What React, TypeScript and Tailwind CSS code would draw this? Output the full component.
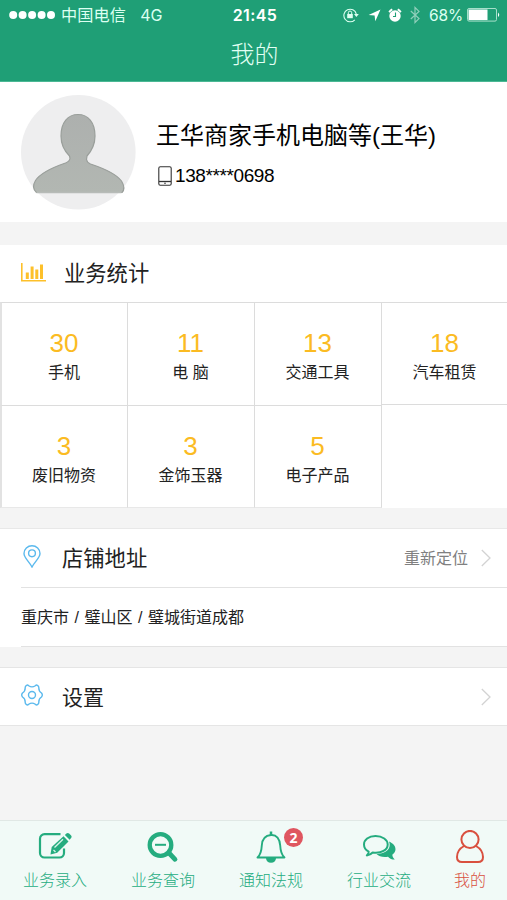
import React from 'react';

const cjk = "font-['Liberation_Sans','Noto_Sans_CJK_SC',sans-serif]";

const stats = [
  { value: 30, label: '手机' },
  { value: 11, label: '电 脑' },
  { value: 13, label: '交通工具' },
  { value: 18, label: '汽车租赁' },
  { value: 3, label: '废旧物资' },
  { value: 3, label: '金饰玉器' },
  { value: 5, label: '电子产品' },
];

function StatusBar() {
  return (
    <div className="flex h-[30px] items-center justify-between pl-[9px] pr-[7px] text-[16px] leading-none text-[#dcfff1]">
      <div className="flex w-[190px] items-center">
        <svg width="46" height="10" viewBox="0 0 46 10" fill="#fff">
          {[4.2, 13.6, 23.1, 32.6, 42].map((cx) => (
            <circle key={cx} cx={cx} cy="5" r="4" />
          ))}
        </svg>
        <span className="ml-[6px] text-[16.2px] tracking-[0.1px]">中国电信</span>
        <span className="ml-[14px] font-['Inter'] text-[16px]">4G</span>
      </div>
      <span className="pl-[1px] font-['Inter'] text-[16px] font-semibold tracking-[0.4px] text-white">21:45</span>
      <div className="flex w-[190px] items-center justify-end">
        {/* orientation lock */}
        <svg width="16" height="16" viewBox="0 0 16 16" fill="none" stroke="currentColor">
          <path d="M11.8 12.8A6.3 6.3 0 1 1 13.3 7" strokeWidth="1.1" />
          <path d="M11 7h4.8l-2.4 3z" fill="currentColor" stroke="none" />
          <rect x="4.2" y="7" width="5.6" height="4.2" fill="currentColor" stroke="none" />
          <path d="M5.3 7V5.7a1.7 1.7 0 0 1 3.4 0V7" strokeWidth="1" />
        </svg>
        <svg className="ml-[9px]" width="13" height="13" viewBox="0 0 13 13" fill="#fff">
          <path d="M12.5.5 7.3 12.3 6.6 6.6.6 6z" />
        </svg>
        <svg className="ml-[7px]" width="14" height="15" viewBox="0 0 14 15">
          <path d="M1.2 4.3A7 7 0 0 1 4.3 1.4M9.7 1.4a7 7 0 0 1 3.1 2.9" fill="none" stroke="#fff" strokeWidth="1.8" />
          <circle cx="7" cy="8" r="5.7" fill="#fff" />
          <path d="M7.5 4.5v4L5 8.5" fill="none" stroke="#1f9f76" strokeWidth="1.1" />
        </svg>
        <svg className="ml-[8px] opacity-50" width="10" height="18" viewBox="0 0 10 18" fill="none" stroke="#fff" strokeWidth="1.2">
          <path d="M.8 5 9 12.6 5 16.5v-15l4 3.9L.8 13" />
        </svg>
        <span className="ml-[9px] pt-[1px] font-['Inter'] text-[15.5px] tracking-[-0.1px]">68%</span>
        <svg className="ml-[4px]" width="33" height="14" viewBox="0 0 33 14">
          <rect x=".5" y=".5" width="29" height="12.6" rx="1.5" fill="none" stroke="#a6dfca" />
          <rect x="1.5" y="1.5" width="19" height="10.6" fill="#fff" />
          <path d="M31 4.5q2.5 2.3 0 4.6z" fill="#fff" />
        </svg>
      </div>
    </div>
  );
}

function Avatar() {
  return (
    <svg className="shrink-0" width="115" height="115" viewBox="0 0 115 115">
      <defs>
        <linearGradient id="body" x1="0" y1="0" x2="0" y2="1">
          <stop offset="0" stopColor="#adb0ae" />
          <stop offset="1" stopColor="#b2b7b2" />
        </linearGradient>
      </defs>
      <circle cx="57.3" cy="57.3" r="57.3" fill="#eeeeef" />
      <path
        d="M57 19.500c10 0 17 8 17 21.500 0 9-3.500 15-8 20l-.5 3.500q.5 3 4 4.500c12 4 25 9 31 17 3 5 3 9 .5 11.500H15.500c-3.500-3-4-7-1-12C20 77 33 72 44.500 68q4-1.500 4.500-4.500L48.500 61C43.500 56 40 50 40 41c0-13.500 7-21.500 17-21.500z"
        fill="url(#body)"
        stroke="#9a9f9b"
        strokeWidth="1.200"
      />
      <path d="M15.500 97.500h85" stroke="#b7bbb8" strokeWidth="1.500" />
    </svg>
  );
}

function Chevron() {
  return (
    <svg width="10" height="18" viewBox="0 0 10 18" fill="none" stroke="#d3d3d3" strokeWidth="1.3">
      <path d="M.8 1 9 9 .8 17" />
    </svg>
  );
}

function Tab({ label, active, children }: { label: string; active?: boolean; children: React.ReactNode }) {
  return (
    <div className={`flex flex-col items-center ${active ? 'text-[#d9503f]' : 'text-[#25ac7f]'}`}>
      <div className="flex h-[38px] items-end">{children}</div>
      <span className="mt-[9px] text-[16px] leading-[25px] font-light whitespace-nowrap">{label}</span>
    </div>
  );
}

function TabBar() {
  return (
    <nav className="grid h-[80px] grid-cols-[108px_108px_108px_108px_74px] border-t border-[#e0e8e5] bg-[#f1faf7] pl-[1px]">
      <Tab label="业务录入">
        <svg className="mb-[-1px]" width="34" height="28" viewBox="0 0 34 28" fill="none">
          <path d="M22.500 2.200H6.500a4.500 4.500 0 0 0-4.500 4.500V21a4.500 4.500 0 0 0 4.500 4.500h15A4.500 4.500 0 0 0 26 21v-4.500" stroke="currentColor" strokeWidth="2.200" />
          <path d="m12.500 22.500 1.200-7.500L25.500 4.300l5 5.200-11.300 11.200z" fill="currentColor" />
          <path d="m26.900 3 1.500-1.500q1.400-1.200 2.700 0l2 2q1 1.300 0 2.500l-1.500 1.700z" fill="currentColor" />
          <path d="m16.500 15.500 8.500-8.300M15.500 18l2 2" stroke="#d7f3e8" strokeWidth="1.300" />
        </svg>
      </Tab>
      <Tab label="业务查询">
        <svg className="mb-[-4px]" width="32" height="31" viewBox="0 0 32 31" fill="none" stroke="currentColor">
          <circle cx="13.500" cy="13" r="10.800" strokeWidth="4.300" />
          <path d="M8 12.800h11" strokeWidth="2" />
          <path d="m22 21 6 6.300" strokeWidth="4.800" strokeLinecap="round" />
        </svg>
      </Tab>
      <Tab label="通知法规">
        <div className="relative mb-[-4px]">
          <svg width="30" height="32" viewBox="0 0 30 32" fill="none" stroke="currentColor">
            <path d="M1.500 26.500c3.500-3 4-6.500 4.300-12C6.100 8 9.500 4.500 15 4s8.900 4 9.200 10.500c.3 5.500.8 9 4.300 12z" strokeWidth="1.900" strokeLinejoin="round" />
            <path d="M10 27h10c0 3-2 4.700-5 4.700s-5-1.700-5-4.700z" fill="currentColor" stroke="none" />
            <path d="M15 4V.5" strokeWidth="2.500" />
          </svg>
          <span className="absolute -top-[3px] left-[28px] flex h-[19px] w-[19px] items-center justify-center rounded-full bg-[#df5660] font-['Open_Sans'] text-[14px] leading-none font-bold text-white">
            2
          </span>
        </div>
      </Tab>
      <Tab label="行业交流">
        <svg className="mb-[-2px]" width="34" height="27" viewBox="0 0 34 27">
          <path d="M27 7.500c8 3.500 8 10 3.300 13.200.2 2 1.200 3.500 2.500 4.900-3 0-5-1-6.800-2.900-5 .8-9-.2-11.500-2.800C23 20 30 15.500 27 7.500z" fill="currentColor" />
          <path
            d="M13.500 2C6.500 2 2 5.800 2 10.500c0 3.300 1.800 5.700 4.700 7.100-.1 1.500-.8 2.800-1.900 3.800 2.600-.3 4.400-1.300 5.900-2.900 8.700 1.200 15-2.600 15-8C25.700 5.800 20.500 2 13.500 2z"
            fill="#f1faf7"
            stroke="currentColor"
            strokeWidth="2"
            strokeLinejoin="round"
          />
        </svg>
      </Tab>
      <Tab label="我的" active>
        <svg className="mb-[-4px]" width="30" height="33" viewBox="0 0 30 33" fill="none" stroke="currentColor" strokeWidth="2">
          <circle cx="15" cy="9.500" r="8.600" />
          <path d="M9 16c-4.500 2.500-7 6.500-7 11 0 3.500 1.700 5 5 5h16c3.300 0 5-1.500 5-5 0-4.500-2.500-8.500-7-11" />
        </svg>
      </Tab>
    </nav>
  );
}

export default function App() {
  return (
    <div className={`flex h-[900px] w-[507px] flex-col overflow-hidden bg-[#f4f4f4] text-[#222] ${cjk}`}>
      <header className="h-[82px] border-b border-[#4bb894] bg-[#1f9f76]">
        <StatusBar />
        <h1 className="pt-[8px] pl-[2px] text-center text-[24px] leading-[34px] font-light text-[#e2fff4]">我的</h1>
      </header>

      <section className="flex h-[140px] bg-white pt-[13px] pl-[21px]">
        <Avatar />
        <div className="ml-[20px] pt-[23px] text-black">
          <div className="text-[24px] leading-[36px] whitespace-nowrap">王华商家手机电脑等(王华)</div>
          <div className="mt-[10px] flex items-center text-[19px] leading-[24px] tracking-[-0.4px]">
            <svg className="mr-[3px] ml-[2px]" width="14" height="20" viewBox="0 0 14 20" fill="none" stroke="#333">
              <rect x=".8" y=".8" width="12.400" height="18.400" rx="1.500" strokeWidth="1.100" />
              <path d="M1 15.500h12" strokeWidth="1.300" />
              <circle cx="7" cy="17.300" r=".8" fill="#333" stroke="none" />
            </svg>
            138****0698
          </div>
        </div>
      </section>

      <section className="mt-[23px] bg-white">
        <div className="flex h-[57px] items-center pl-[21px]">
          <svg className="mt-[-3px]" width="25" height="19" viewBox="0 0 25 19" fill="#fdc02a">
            <path d="M0 0h1.600v17H25v1.600H0z" />
            <path d="M4.800 9.500h3V16h-3zM9.600 3.500h3V16h-3zM14.300 6.500h3V16h-3zM19 1.500h3V16h-3z" />
          </svg>
          <h2 className="ml-[18px] pt-[3px] text-[21.3px] leading-none">业务统计</h2>
        </div>
        <div className="grid h-[206px] grid-cols-[128px_127px_127px_125px] grid-rows-[103px_103px]">
          {stats.map((item, i) => (
            <div
              key={item.label}
              className={`flex flex-col items-center border-t border-[#dcdcdc] pt-[25px] ${i === 3 ? 'border-b' : 'border-r pr-[1px]'} ${
                i % 4 === 0 ? 'border-l-2 border-l-[#e2e2e2]' : ''
              } ${i > 3 ? 'border-b border-b-[#e8e8e8]' : ''}`}
            >
              <div className="text-[26px] leading-[30px] text-[#fbbb22]">{item.value}</div>
              <div className="mt-[4px] text-[16px] leading-[22px]">{item.label}</div>
            </div>
          ))}
        </div>
      </section>

      <section className="mt-[20px] border-t border-[#e8e8e8] bg-white">
        <div className="flex h-[58px] items-center pr-[16px] pl-[23px]">
          <svg className="mt-[-4px]" width="18" height="23" viewBox="0 0 18 23" fill="none" stroke="#5bb9ed" strokeWidth="1.400">
            <path d="M9 22C7 17.500 1 13 1 8.500a8 7.700 0 0 1 16 0C17 13 11 17.500 9 22z" />
            <circle cx="9" cy="8.300" r="3.400" />
          </svg>
          <h2 className="ml-[21px] pt-[3px] text-[21.3px] leading-none">店铺地址</h2>
          <span className="mr-[13px] ml-auto pt-[1px] text-[16px] leading-none text-[#808080]">重新定位</span>
          <Chevron />
        </div>
        <div className="ml-[21px] flex h-[60px] items-center border-y border-[#e2e2e2] pt-[1px] text-[16px] leading-none [word-spacing:1.1px]">
          重庆市 / 璧山区 / 璧城街道成都
        </div>
      </section>

      <section className="mt-[20px] flex h-[59px] items-center border-y border-[#e5e5e5] bg-white pr-[16px] pl-[21px]">
        <svg className="mt-[-3px]" width="22" height="22" viewBox="0 0 22 22" fill="none" stroke="#5bb9ed" strokeWidth="1.400" strokeLinejoin="round">
          <path d="M5.500 1.300Q6.600.6 7.700 1.700 11 4 14.300 1.700q1.100-1.100 2.200-.4 1.500.9 1.300 2.500-.1 3.400 2.700 5.200 1.600 2 0 4-2.800 1.800-2.700 5.200.2 1.600-1.300 2.500-1.100.7-2.200-.4Q11 18 7.700 20.300q-1.100 1.100-2.200.4-1.500-.9-1.300-2.500.1-3.400-2.700-5.200-1.600-2 0-4 2.800-1.800 2.700-5.200-.2-1.600 1.300-2.500z" />
          <circle cx="11" cy="11" r="3.500" />
        </svg>
        <h2 className="ml-[19px] pt-[2px] text-[21px] leading-none">设置</h2>
        <div className="ml-auto">
          <Chevron />
        </div>
      </section>

      <div className="flex-1" />
      <TabBar />
    </div>
  );
}
